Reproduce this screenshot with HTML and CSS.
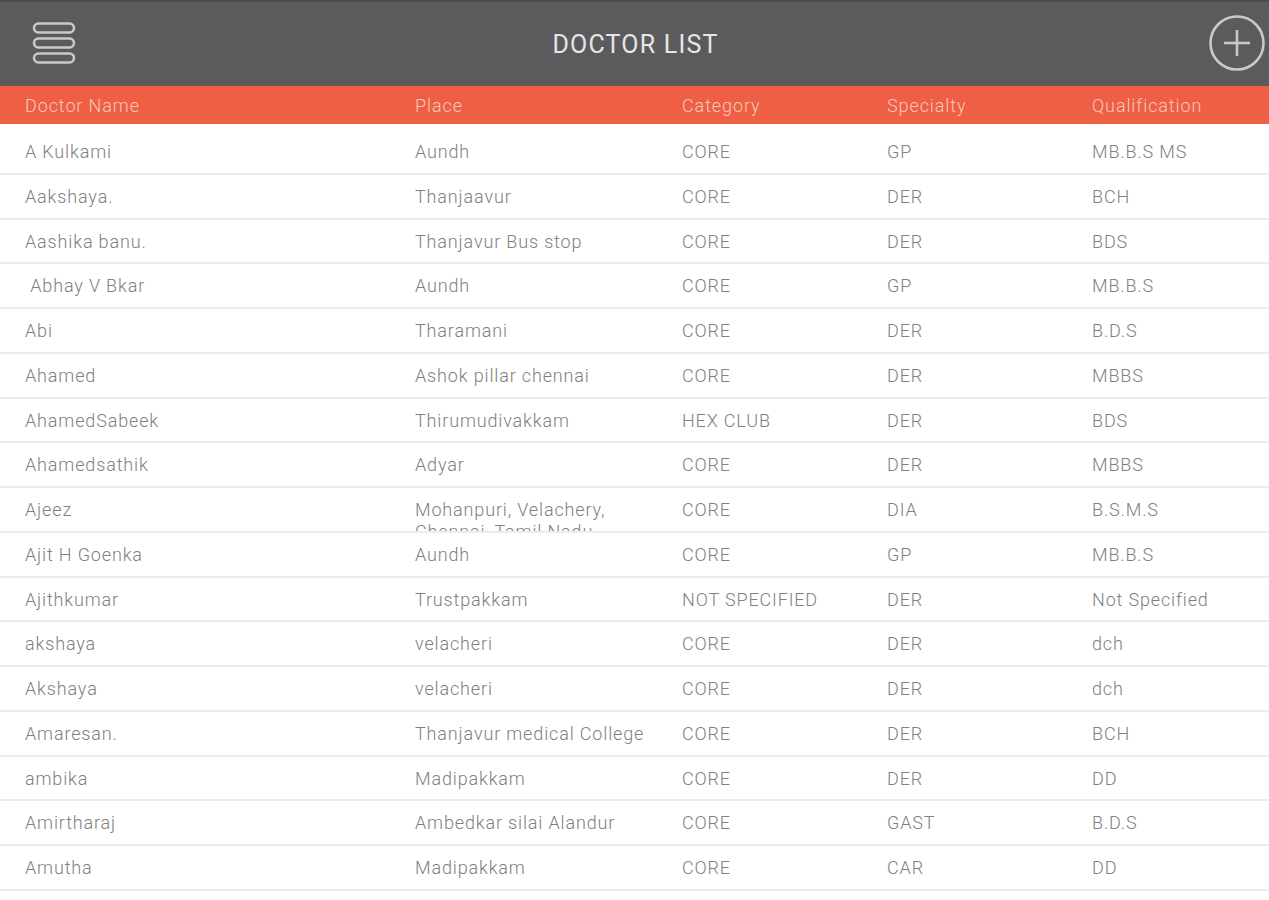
FILE: index.html
```html
<!DOCTYPE html>
<html lang="en">
<head>
  <meta charset="UTF-8" />
  <meta name="viewport" content="width=device-width, initial-scale=1" />
  <title>Doctor List</title>
  <link rel="stylesheet" href="styles.css">
</head>
<body>

  <header class="top-bar">
    <button class="icon-btn menu-btn" aria-label="Menu">
      <svg width="44" height="44" viewBox="0 0 44 44" fill="none" stroke="#c9c9c9" stroke-width="2.6">
        <rect x="2" y="2.5" width="40" height="9" rx="4.5" />
        <rect x="2" y="17.5" width="40" height="9" rx="4.5" />
        <rect x="2" y="32.5" width="40" height="9" rx="4.5" />
      </svg>
    </button>
    <h1 class="title">DOCTOR LIST</h1>
    <button class="icon-btn add-btn" aria-label="Add doctor">
      <svg width="58" height="58" viewBox="0 0 58 58" fill="none" stroke="#c9c9c9" stroke-width="2.6">
        <circle cx="29" cy="29" r="26.5" />
        <line x1="16" y1="29" x2="42" y2="29" />
        <line x1="29" y1="16" x2="29" y2="42" />
      </svg>
    </button>
  </header>

  <div class="list-head">
    <span>Doctor Name</span>
    <span>Place</span>
    <span>Category</span>
    <span>Specialty</span>
    <span>Qualification</span>
  </div>

  <div class="doctor-list" id="doctorList">
    <!-- rows are rendered here -->
  </div>

  <script>
    const doctors = [
      ['A Kulkami', 'Aundh', 'CORE', 'GP', 'MB.B.S MS'],
      ['Aakshaya.', 'Thanjaavur', 'CORE', 'DER', 'BCH'],
      ['Aashika banu.', 'Thanjavur Bus stop', 'CORE', 'DER', 'BDS'],
      ['\u00a0Abhay V Bkar', 'Aundh', 'CORE', 'GP', 'MB.B.S'],
      ['Abi', 'Tharamani', 'CORE', 'DER', 'B.D.S'],
      ['Ahamed', 'Ashok pillar chennai', 'CORE', 'DER', 'MBBS'],
      ['AhamedSabeek', 'Thirumudivakkam', 'HEX CLUB', 'DER', 'BDS'],
      ['Ahamedsathik', 'Adyar', 'CORE', 'DER', 'MBBS'],
      ['Ajeez', 'Mohanpuri, Velachery, Chennai, Tamil Nadu', 'CORE', 'DIA', 'B.S.M.S'],
      ['Ajit H Goenka', 'Aundh', 'CORE', 'GP', 'MB.B.S'],
      ['Ajithkumar', 'Trustpakkam', 'NOT SPECIFIED', 'DER', 'Not Specified'],
      ['akshaya', 'velacheri', 'CORE', 'DER', 'dch'],
      ['Akshaya', 'velacheri', 'CORE', 'DER', 'dch'],
      ['Amaresan.', 'Thanjavur medical College', 'CORE', 'DER', 'BCH'],
      ['ambika', 'Madipakkam', 'CORE', 'DER', 'DD'],
      ['Amirtharaj', 'Ambedkar silai Alandur', 'CORE', 'GAST', 'B.D.S'],
      ['Amutha', 'Madipakkam', 'CORE', 'CAR', 'DD']
    ];

    const doctorList = document.getElementById('doctorList');

    doctors.forEach(doc => {
      const row = document.createElement('div');
      row.classList.add('doctor-row');
      doc.forEach(value => {
        const cell = document.createElement('span');
        cell.textContent = value;
        row.appendChild(cell);
      });
      doctorList.appendChild(row);
    });
  </script>

</body>
</html>
```

FILE: styles.css
```css
body {
  margin: 0;
  font-family: Roboto, 'Liberation Sans', sans-serif;
  background-color: #ffffff;
  color: #808080;
  overflow: hidden;
}
.top-bar {
  height: 86px;
  background-color: #5b5b5d;
  border-top: 2px solid #4a4a4c;
  box-sizing: border-box;
  display: grid;
  grid-template-columns: 1fr auto 1fr;
  align-items: center;
  padding: 0 3px 0 32px;
}
.title {
  margin: 0 0 0 -27px;
  font-size: 25px;
  font-weight: 400;
  color: #e6e6e6;
  letter-spacing: 1.2px;
}
.icon-btn {
  background: none;
  border: none;
  padding: 0;
  display: flex;
  cursor: pointer;
  margin-top: -2px;
}
.menu-btn {
  justify-self: start;
}
.add-btn {
  justify-self: end;
}
.list-head,
.doctor-row {
  display: grid;
  grid-template-columns: 390px 267px 205px 205px 1fr;
  padding-left: 25px;
}
.list-head {
  height: 38px;
  align-items: center;
  background-color: #ee5f45;
  color: #f8c9b4;
  font-size: 18px;
  font-weight: 300;
  letter-spacing: 0.9px;
}
.doctor-list {
  padding-top: 6px;
}
.doctor-row {
  height: 42.75px;
  border-bottom: 2px solid #ececec;
  overflow: hidden;
  font-size: 18px;
  font-weight: 300;
  line-height: 22px;
  letter-spacing: 0.85px;
}
.doctor-row span {
  padding: 11px 25px 0 0;
}
```
